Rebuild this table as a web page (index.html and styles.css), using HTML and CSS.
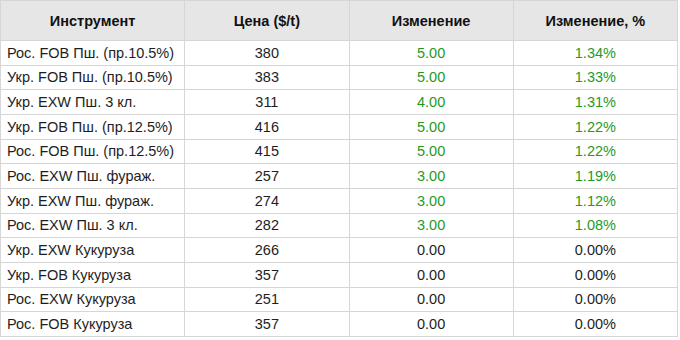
FILE: index.html
```html
<!DOCTYPE html>
<html lang="ru">
<head>
<meta charset="utf-8">
<link rel="stylesheet" href="styles.css">
</head>
<body>
<table class="quotes">
  <colgroup>
    <col class="c-name"><col class="c-num"><col class="c-num"><col class="c-num">
  </colgroup>
  <thead>
    <tr><th>Инструмент</th><th>Цена ($/t)</th><th>Изменение</th><th>Изменение, %</th></tr>
  </thead>
  <tbody>
    <tr><td class="name">Рос. FOB Пш. (пр.10.5%)</td><td>380</td><td class="up">5.00</td><td class="up">1.34%</td></tr>
    <tr><td class="name">Укр. FOB Пш. (пр.10.5%)</td><td>383</td><td class="up">5.00</td><td class="up">1.33%</td></tr>
    <tr><td class="name">Укр. EXW Пш. 3 кл.</td><td>311</td><td class="up">4.00</td><td class="up">1.31%</td></tr>
    <tr><td class="name">Укр. FOB Пш. (пр.12.5%)</td><td>416</td><td class="up">5.00</td><td class="up">1.22%</td></tr>
    <tr><td class="name">Рос. FOB Пш. (пр.12.5%)</td><td>415</td><td class="up">5.00</td><td class="up">1.22%</td></tr>
    <tr><td class="name">Рос. EXW Пш. фураж.</td><td>257</td><td class="up">3.00</td><td class="up">1.19%</td></tr>
    <tr><td class="name">Укр. EXW Пш. фураж.</td><td>274</td><td class="up">3.00</td><td class="up">1.12%</td></tr>
    <tr><td class="name">Рос. EXW Пш. 3 кл.</td><td>282</td><td class="up">3.00</td><td class="up">1.08%</td></tr>
    <tr><td class="name">Укр. EXW Кукуруза</td><td>266</td><td>0.00</td><td>0.00%</td></tr>
    <tr><td class="name">Укр. FOB Кукуруза</td><td>357</td><td>0.00</td><td>0.00%</td></tr>
    <tr><td class="name">Рос. EXW Кукуруза</td><td>251</td><td>0.00</td><td>0.00%</td></tr>
    <tr><td class="name">Рос. FOB Кукуруза</td><td>357</td><td>0.00</td><td>0.00%</td></tr>
  </tbody>
</table>
</body>
</html>
```

FILE: styles.css
```css
html, body {
  margin: 0;
  padding: 0;
  background: #ffffff;
}

.quotes {
  width: 678px;
  border-collapse: collapse;
  table-layout: fixed;
  font-family: "Liberation Sans", Arial, sans-serif;
  font-size: 14.5px;
  color: #1e1e1e;
}

.c-name { width: 184px; }
.c-num { width: 164px; }

.quotes th,
.quotes td {
  border: 1px solid #d6d6d6;
  text-align: center;
  padding: 0 6px;
  white-space: nowrap;
  overflow: hidden;
}

.quotes th {
  background: #e6e6e6;
  color: #111111;
  font-weight: bold;
  height: 39px;
}

.quotes td {
  height: 23.67px;
}

.quotes td.name {
  text-align: left;
  padding-left: 6px;
}

.quotes td.up {
  color: #1f9a1f;
}
```
